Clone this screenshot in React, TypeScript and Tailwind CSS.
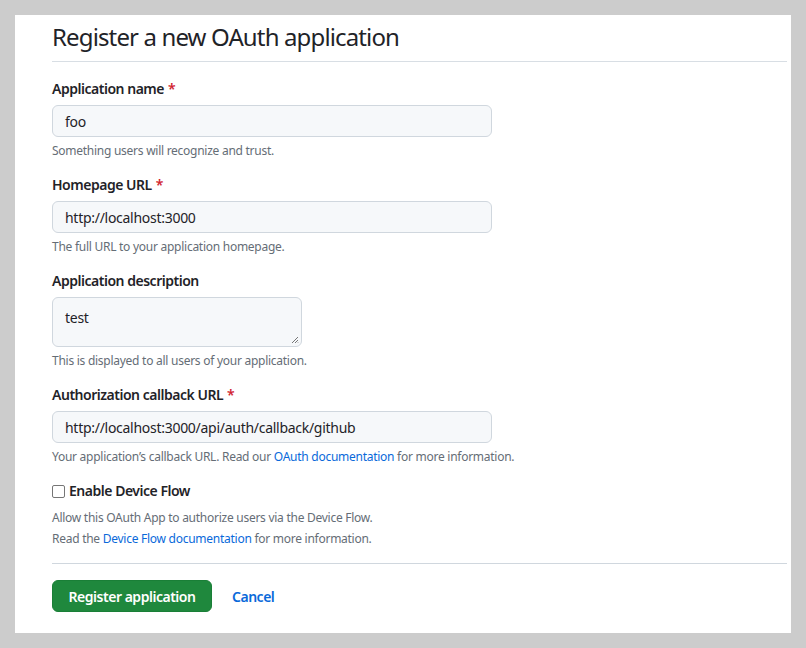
import React from 'react'

const font = { fontFamily: '"Noto Sans", "Open Sans", sans-serif' }

function Label({ text, required }: { text: string; required?: boolean }) {
  return (
    <label className="block text-[14px] leading-[20px] font-semibold text-[#1f2328]">
      {text}
      {required && <span className="ml-1 text-[#d1242f]">*</span>}
    </label>
  )
}

function Note({ children }: { children: React.ReactNode }) {
  return (
    <p className="mt-[5px] text-[12px] leading-[18px] tracking-[-0.022em] text-[#656d76]">{children}</p>
  )
}

function TextInput({ value }: { value: string }) {
  return (
    <div className="mt-[6px] flex h-[32px] w-[440px] items-center rounded-[6px] border border-[#d0d7de] bg-[#f6f8fa] px-[12px] text-[14px] tracking-[-0.02em] text-[#1f2328]">
      {value}
    </div>
  )
}

export default function App() {
  return (
    <div className="h-screen w-full bg-[#cccccc] p-[15px] tracking-[-0.03em]" style={font}>
      <div className="h-full bg-white pl-[37px] pr-[4px] pt-[4px]">
        <h2 className="border-b border-[#d8dee4] pb-[6px] text-[24px] leading-[36px] font-normal tracking-[-0.036em] text-[#1f2328]">
          Register a new OAuth application
        </h2>

        <div className="mt-[17px]">
          <Label text="Application name" required />
          <TextInput value="foo" />
          <Note>Something users will recognize and trust.</Note>
        </div>

        <div className="mt-[15px]">
          <Label text="Homepage URL" required />
          <TextInput value="http://localhost:3000" />
          <Note>The full URL to your application homepage.</Note>
        </div>

        <div className="mt-[15px]">
          <Label text="Application description" />
          <div className="relative mt-[6px] h-[50px] w-[250px] rounded-[6px] border border-[#d0d7de] bg-[#f6f8fa] px-[12px] pt-[10px] text-[14px] leading-[20px] tracking-[-0.02em] text-[#1f2328]">
            test
            <svg className="absolute bottom-[2px] right-[2px]" width="8" height="8" viewBox="0 0 8 8">
              <path d="M7 1L1 7M7 4L4 7M7 6.5L6.5 7" stroke="#767676" strokeWidth="1" />
            </svg>
          </div>
          <Note>This is displayed to all users of your application.</Note>
        </div>

        <div className="mt-[15px]">
          <Label text="Authorization callback URL" required />
          <TextInput value="http://localhost:3000/api/auth/callback/github" />
          <Note>
            Your application’s callback URL. Read our{' '}
            <a className="text-[#0969da]">OAuth documentation</a> for more information.
          </Note>
        </div>

        <div className="mt-[15px]">
          <label className="flex items-center gap-[4px] text-[14px] leading-[20px] font-semibold text-[#1f2328]">
            <span className="inline-block h-[13px] w-[13px] rounded-[2px] border border-[#767676] bg-white" />
            Enable Device Flow
          </label>
          <p className="mt-[8px] text-[12px] leading-[18px] tracking-[-0.022em] text-[#656d76]">
            Allow this OAuth App to authorize users via the Device Flow.
          </p>
          <p className="mt-[3px] text-[12px] leading-[18px] tracking-[-0.022em] text-[#656d76]">
            Read the <a className="text-[#0969da]">Device Flow documentation</a> for more information.
          </p>
        </div>

        <div className="mt-[15px] border-t border-[#d0d7de] pt-[16px]">
          <div className="flex items-center gap-[20px]">
            <button className="h-[32px] w-[160px] rounded-[6px] border border-[#1a7f37] bg-[#1f883d] text-[14px] font-semibold text-white">
              Register application
            </button>
            <button className="text-[14px] font-semibold text-[#0969da]">Cancel</button>
          </div>
        </div>
      </div>
    </div>
  )
}
